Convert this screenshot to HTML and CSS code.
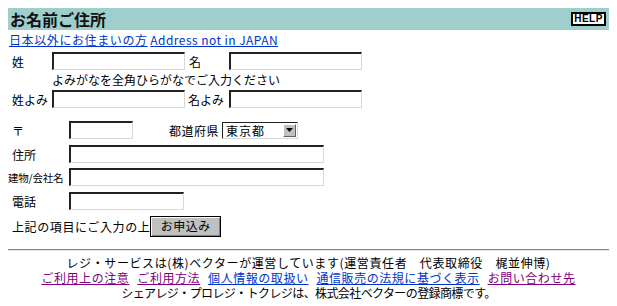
FILE: index.html
```html
<!DOCTYPE html>
<html lang="ja">
<head>
<meta charset="utf-8">
<title>お名前ご住所</title>
<link rel="stylesheet" href="styles.css">
</head>
<body>
<div class="hdr">
  <h1 class="ttl">お名前ご住所</h1>
  <span class="help">HELP</span>
</div>
<div class="links"><a class="lk jp" href="#">日本以外にお住まいの方</a> <a class="lk en" href="#">Address not in JAPAN</a></div>

<div class="row r1">
  <span class="lb1">姓</span><span class="inp w133"></span>
  <span class="lb1">名</span><span class="inp w133"></span>
</div>
<div class="note">よみがなを全角ひらがなでご入力ください</div>
<div class="row">
  <span class="lb1">姓よみ</span><span class="inp w133"></span>
  <span class="lb1 lb1b">名よみ</span><span class="inp w133"></span>
</div>

<div class="row r3">
  <span class="lb2">〒</span><span class="inp w64"></span>
  <span class="pref">都道府県</span>
  <span class="sel"><span class="seltxt">東京都</span><span class="selbtn"><svg width="9" height="5" viewBox="0 0 9 5"><path d="M1 0h7L4.5 4z" fill="#000"/></svg></span></span>
</div>
<div class="row r4">
  <span class="lb2">住所</span><span class="inp w255"></span>
</div>
<div class="row r5">
  <span class="lb2 small">建物/会社名</span><span class="inp w255"></span>
</div>
<div class="row r6">
  <span class="lb2">電話</span><span class="inp w115"></span>
</div>
<div class="row r7">
  <span class="submit-lbl">上記の項目にご入力の上</span><span class="btn">お申込み</span>
</div>

<div class="rule"></div>
<div class="foot">
  <div class="fl f1">レジ・サービスは(株)ベクターが運営しています(運営責任者　代表取締役　梶並伸博)</div>
  <div class="fl flinks"><a class="v" href="#">ご利用上の注意</a><a class="v" href="#">ご利用方法</a><a class="lk" href="#">個人情報の取扱い</a><a class="lk" href="#">通信販売の法規に基づく表示</a><a class="v" href="#">お問い合わせ先</a></div>
  <div class="fl f3">シェアレジ・プロレジ・トクレジは、株式会社ベクターの登録商標です。</div>
</div>
</body>
</html>
```

FILE: styles.css
```css
body {
  margin: 8px;
  font-family: "Noto Sans CJK JP", "Noto Sans", sans-serif;
  font-size: 12px;
  line-height: 15px;
  color: #000;
  background: #fff;
}
.hdr {
  display: flex;
  justify-content: space-between;
  align-items: center;
  height: 22px;
  background: #9fcfcc;
  padding: 0 3px 0 2px;
}
.ttl {
  margin: 0;
  font-size: 16px;
  font-weight: bold;
  line-height: 22px;
  color: #111;
}
.help {
  display: inline-block;
  box-sizing: border-box;
  width: 35px;
  height: 14px;
  border: 2px solid #000;
  background: #fff;
  font-family: "Liberation Sans", Arial, sans-serif;
  font-weight: bold;
  font-size: 10px;
  line-height: 10px;
  text-align: center;
  letter-spacing: 0.5px;
}
.links {
  margin-top: 2px;
  height: 16px;
  line-height: 16px;
  padding-left: 1px;
}
.jp { letter-spacing: 0.6px; }
.en { letter-spacing: 0.45px; }
a.lk { color: #0033cc; text-decoration: underline; }
a.v { color: #800080; text-decoration: underline; }
.row {
  display: flex;
  align-items: center;
  height: 18px;
}
.r1 { margin-top: 4px; }
.lb1 {
  box-sizing: border-box;
  width: 44px;
  padding-left: 4px;
  white-space: nowrap;
}
.lb1b { padding-left: 3px; }
.inp {
  box-sizing: border-box;
  display: inline-block;
  height: 18px;
  background: #fff;
  border-style: solid;
  border-width: 2px 1px 1px 2px;
  border-color: #222 #d8d8d8 #d8d8d8 #222;
}
.w133 { width: 133px; }
.w64 { width: 64px; }
.w255 { width: 255px; }
.w115 { width: 115px; }
.note {
  height: 20px;
  line-height: 20px;
  padding-left: 44px;
}
.r3 { margin-top: 13px; }
.r4 { margin-top: 6px; }
.r5 { margin-top: 5px; }
.r6 { margin-top: 6px; }
.r7 { margin-top: 6px; height: 21px; }
.lb2 {
  box-sizing: border-box;
  width: 61px;
  padding-left: 4px;
  white-space: nowrap;
}
.lb2.small {
  font-size: 10.5px;
  padding-left: 0;
  letter-spacing: -0.2px;
}
.pref {
  margin-left: 36px;
  margin-right: 3px;
  letter-spacing: 0.5px;
}
.sel {
  box-sizing: border-box;
  display: inline-flex;
  align-items: center;
  justify-content: space-between;
  width: 76px;
  height: 17px;
  background: #fff;
  border-style: solid;
  border-width: 1px;
  border-color: #222 #d8d8d8 #d8d8d8 #222;
  padding: 0 1px 0 3px;
}
.seltxt { line-height: 15px; letter-spacing: 1px; }
.selbtn {
  box-sizing: border-box;
  display: inline-flex;
  align-items: center;
  justify-content: center;
  width: 13px;
  height: 13px;
  background: #c0c0c0;
  border-style: solid;
  border-width: 1px;
  border-color: #fff #606060 #606060 #fff;
}
.submit-lbl {
  padding-left: 4px;
  letter-spacing: 0.6px;
}
.btn {
  box-sizing: border-box;
  display: inline-flex;
  align-items: center;
  justify-content: center;
  width: 71px;
  height: 21px;
  background: #c0c0c0;
  border: 1px solid #000;
  box-shadow: inset 1px 1px 0 #fff, inset -1px -1px 0 #808080;
  letter-spacing: 0.5px;
  padding-bottom: 2px;
}
.rule {
  margin-top: 12px;
  height: 0;
  border-top: 1px solid #888;
  border-bottom: 1px solid #e4e4e4;
}
.foot {
  margin-top: 4px;
  text-align: center;
  letter-spacing: 0.55px;
}
.fl {
  height: 15px;
  line-height: 15px;
  white-space: nowrap;
}
.f1 { letter-spacing: 0.6px; }
.f3 { letter-spacing: -0.6px; }
.flinks {
  display: flex;
  justify-content: center;
  gap: 8px;
}
```
